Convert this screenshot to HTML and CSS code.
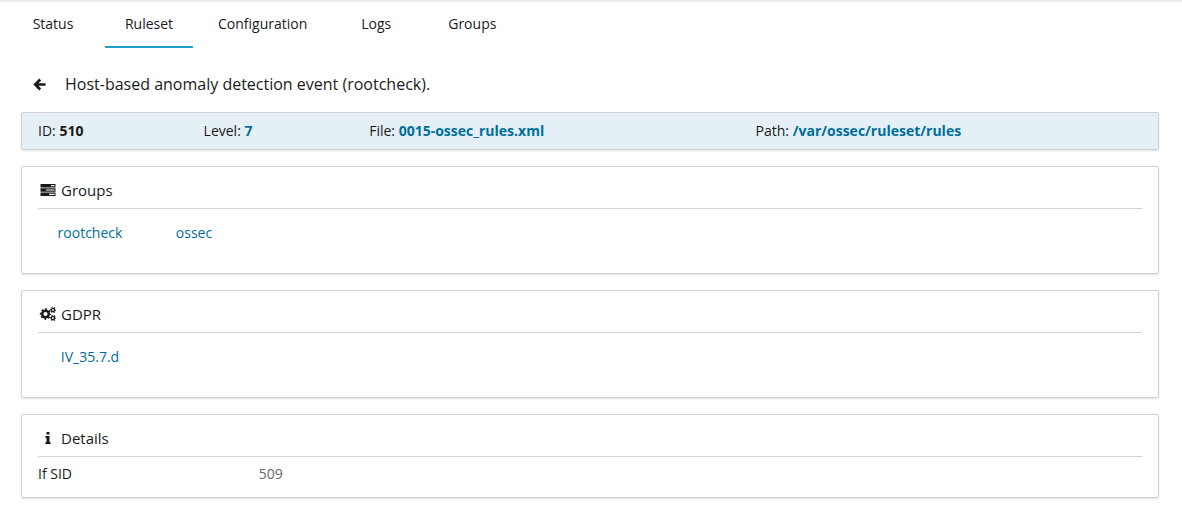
FILE: index.html
```html
<!DOCTYPE html>
<html lang="en">
<head>
<meta charset="utf-8">
<meta name="viewport" content="width=device-width, initial-scale=1">
<title>Ruleset</title>
<link rel="stylesheet" href="styles.css">
</head>
<body>
<nav class="tabs">
  <button class="tab" type="button">Status</button>
  <button class="tab tab-active" type="button" aria-current="page">Ruleset</button>
  <button class="tab" type="button">Configuration</button>
  <button class="tab" type="button">Logs</button>
  <button class="tab" type="button">Groups</button>
</nav>
<main class="content">
  <header class="heading">
    <button class="back" type="button" aria-label="Back">
      <svg class="icon-back" viewBox="0 0 13 13" aria-hidden="true"><path d="M7.200 1.500 2.300 6.500l4.900 5M2.500 6.500h10" fill="none" stroke="currentColor" stroke-width="2.700"/></svg>
    </button>
    <h1 class="title">Host-based anomaly detection event (rootcheck).</h1>
  </header>

  <section class="card summary">
    <div>ID: <b>510</b></div>
    <div>Level: <a class="link" href="#level"><b>7</b></a></div>
    <div>File: <a class="link" href="#file"><b>0015-ossec_rules.xml</b></a></div>
    <div>Path: <a class="link" href="#path"><b>/var/ossec/ruleset/rules</b></a></div>
  </section>

  <section class="card">
    <h2 class="card-title">
      <svg class="icon" viewBox="0 0 16 14" aria-hidden="true"><path fill="currentColor" fill-rule="evenodd" d="M.5 1h15v3.500H.5zM11 2h3.500v1.200H11zM.5 5.300h15v3.500H.5zM6 6.400h8.500v1.200H6zM.5 9.500h15V13H.5zM9 10.700h5.500v1.200H9z"/></svg>
      Groups
    </h2>
    <div class="links">
      <a class="link" href="#rootcheck">rootcheck</a>
      <a class="link" href="#ossec">ossec</a>
    </div>
  </section>

  <section class="card">
    <h2 class="card-title">
      <svg class="icon" viewBox="0 0 16 14" aria-hidden="true">
        <g fill="none" stroke="currentColor">
          <circle cx="5.500" cy="7" r="3.300" stroke-width="2.400"/>
          <circle cx="5.500" cy="7" r="4.900" stroke-width="1.600" stroke-dasharray="1.924 1.924" stroke-dashoffset=".962"/>
          <circle cx="13" cy="3" r="1.600" stroke-width="1.300"/>
          <circle cx="13" cy="3" r="2.500" stroke-width="1.200" stroke-dasharray="1.309 1.309" stroke-dashoffset=".654"/>
          <circle cx="13" cy="11" r="1.600" stroke-width="1.300"/>
          <circle cx="13" cy="11" r="2.500" stroke-width="1.200" stroke-dasharray="1.309 1.309" stroke-dashoffset=".654"/>
        </g>
      </svg>
      GDPR
    </h2>
    <div class="links">
      <a class="link" href="#gdpr">IV_35.7.d</a>
    </div>
  </section>

  <section class="card details">
    <h2 class="card-title">
      <svg class="icon" viewBox="0 0 16 14" aria-hidden="true"><path fill="currentColor" d="M6.500 1h3v2.500h-3zM5.500 5h4v6h1v2h-5v-2h1V7h-1z"/></svg>
      Details
    </h2>
    <dl class="fields">
      <dt>If SID</dt>
      <dd>509</dd>
    </dl>
  </section>
</main>
</body>
</html>
```
FILE: styles.css
```css
* {
  box-sizing: border-box;
}

body {
  margin: 0;
  background: #fff;
  color: #1a1a1a;
  font: 14px/20px "Open Sans", "Noto Sans", sans-serif;
}

button {
  border: 0;
  background: none;
  color: inherit;
  font: inherit;
  cursor: pointer;
}

.tabs {
  display: flex;
  gap: 8px;
  padding: 0 9px;
  box-shadow: inset 0 2px 1px #ebebeb;
}

.tab {
  min-width: 88px;
  height: 48px;
  padding: 2px 17px 0;
  border-bottom: 2px solid transparent;
}

.tab-active {
  border-bottom-color: #259fca;
}

.content {
  display: flex;
  flex-direction: column;
  gap: 16px;
  padding: 24px 23px 10px 21px;
}

.heading {
  display: flex;
  align-items: center;
  gap: 18px;
  height: 24px;
  padding-left: 11px;
}

.back {
  display: flex;
  padding: 0 1px;
}

.icon-back {
  width: 13px;
  height: 13px;
}

.title {
  margin: 0;
  font-size: 16px;
  font-weight: 400;
}

.card {
  min-height: 108px;
  padding: 8px 16px;
  border: 1px solid #d0d0d0;
  border-radius: 2px;
  box-shadow: 0 1px 2px rgba(0, 0, 0, 0.12);
}

.summary {
  display: grid;
  grid-template-columns: 15fr 15fr 35fr 35fr;
  min-height: 0;
  background: #e4f0f5;
}

.link {
  color: #006e9c;
  text-decoration: none;
}

.card-title {
  display: flex;
  align-items: center;
  gap: 5px;
  margin: 0;
  padding: 5px 0 8px 2px;
  border-bottom: 1px solid #d3d3d3;
  font-size: 15px;
  font-weight: 400;
}

.icon {
  width: 16px;
  height: 14px;
  overflow: visible;
}

.links {
  display: grid;
  grid-template-columns: repeat(auto-fill, 104px);
  padding-top: 14px;
  text-align: center;
}

.details {
  min-height: 84px;
}

.fields {
  display: grid;
  grid-template-columns: 1fr 4fr;
  margin: 0;
  padding-top: 7px;
}

.fields dd {
  margin: 0;
  color: #666;
}
```
